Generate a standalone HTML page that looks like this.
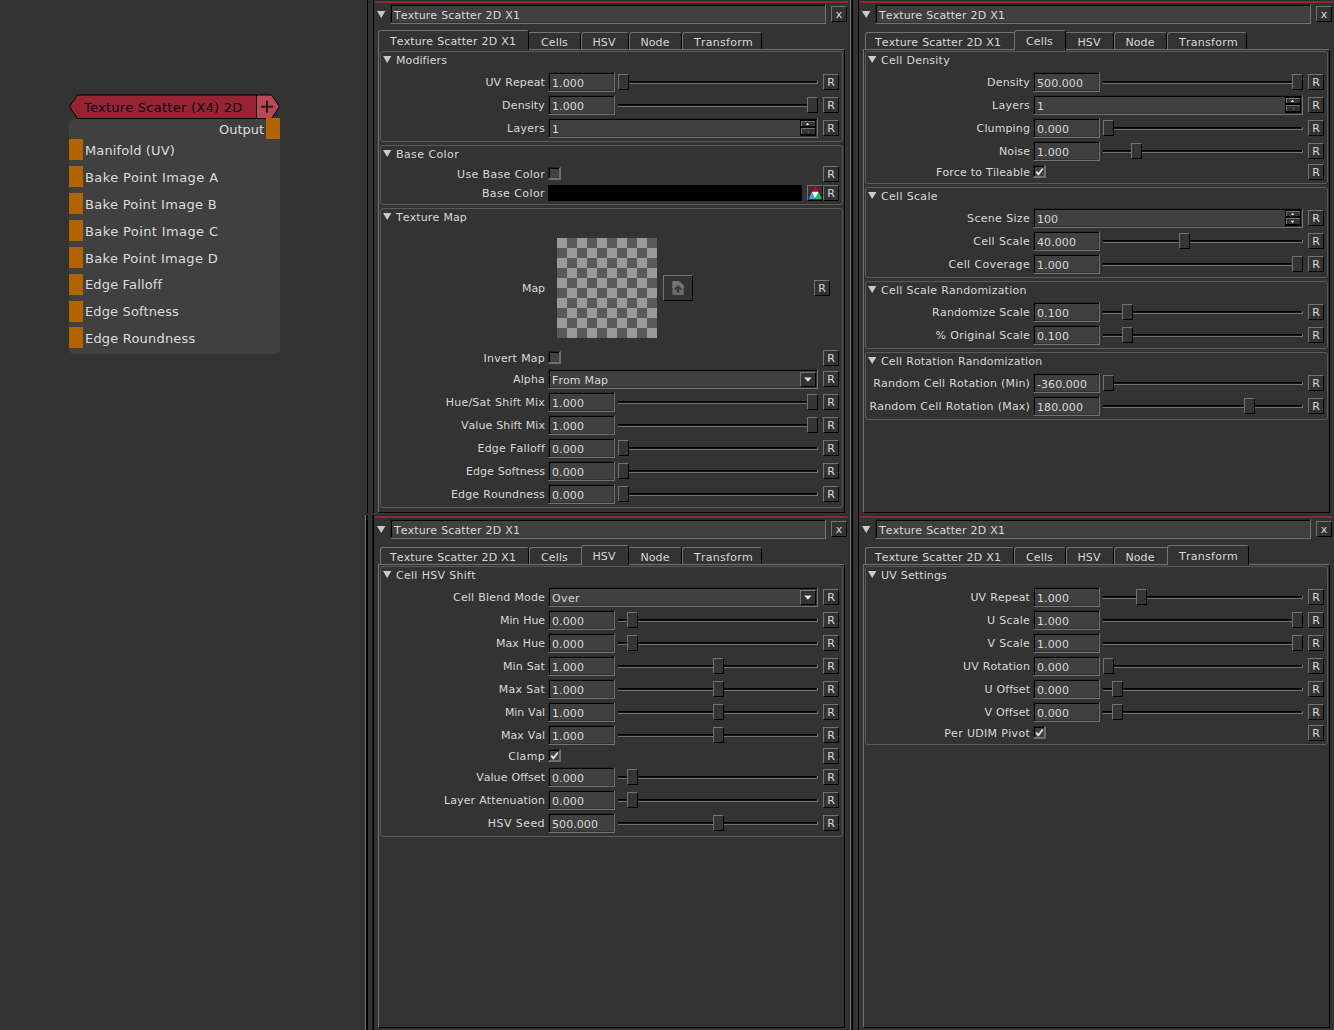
<!DOCTYPE html>
<html><head><meta charset="utf-8"><title>Texture Scatter 2D</title>
<style>
html,body{margin:0;padding:0;background:#333333;}
body{width:1334px;height:1030px;position:relative;overflow:hidden;font-family:"DejaVu Sans","Liberation Sans",sans-serif;font-size:11px;color:#d8d8d8;}
div{position:absolute;}
.t{white-space:nowrap;font-kerning:none;}
.fld{background:#404040;border-top:1px solid #2a2a2a;border-left:1px solid #2a2a2a;border-right:1px solid #727272;border-bottom:1px solid #727272;box-shadow:inset 1px 1px 0 0 #000,inset -1px -1px 0 0 #333;}
.rb{width:14px;height:14px;background:#333333;border-top:1px solid #727272;border-left:1px solid #727272;border-right:1px solid #000;border-bottom:1px solid #000;}
.rb span{position:absolute;left:0;top:1px;width:14px;line-height:14px;text-align:center;font-size:11px;}
svg{display:block;}
.grv{width:199px;height:2px;background:linear-gradient(#000 50%,#141414 50%);border-bottom:1px solid #727272;border-right:1px solid #727272;}
.hnd{width:9px;height:14px;background:#353535;border-top:1px solid #727272;border-left:1px solid #727272;border-right:1px solid #000;border-bottom:1px solid #000;}
.cb{width:10px;height:10px;background:#414141;border-top:1px solid #232323;border-left:1px solid #232323;border-right:2px solid #6f6f6f;border-bottom:2px solid #6f6f6f;box-shadow:inset 1px 1px 0 0 #000;}
.cb svg{position:absolute;left:1px;top:1px;}
.sb{width:13px;background:#333333;border-top:1px solid #727272;border-left:1px solid #727272;}
.sb svg{position:absolute;left:0;top:0;}
.cbtn{width:14px;height:13px;background:#333333;border-top:1px solid #727272;border-left:1px solid #727272;border-right:1px solid #000;border-bottom:1px solid #000;}
.cbtn svg{position:absolute;left:0;top:0;}
.chk{width:100px;height:100px;background-color:#595959;background-image:conic-gradient(#595959 25%,#9a9a9a 0 50%,#595959 0 75%,#9a9a9a 0);background-size:20px 20px;}
.lb{width:28px;height:24px;background:#333333;border-top:1px solid #727272;border-left:1px solid #727272;border-right:1px solid #000;border-bottom:1px solid #000;}
.lb svg{position:absolute;left:0;top:0;}
</style></head>
<body>
<div style="left:367px;top:0px;width:1px;height:513px;background:#000"></div>
<div style="left:373px;top:0px;width:1px;height:513px;background:#000"></div>
<div style="left:365px;top:515px;width:1px;height:515px;background:#727272"></div>
<div style="left:366px;top:515px;width:2px;height:515px;background:#000"></div>
<div style="left:372px;top:515px;width:1px;height:515px;background:#161616"></div>
<div style="left:373px;top:515px;width:1px;height:515px;background:#000"></div>
<div style="left:850px;top:0px;width:1px;height:1030px;background:#727272"></div>
<div style="left:851px;top:0px;width:1px;height:1030px;background:#181818"></div>
<div style="left:852px;top:0px;width:1px;height:1030px;background:#000"></div>
<div style="left:858px;top:0px;width:1px;height:1030px;background:#000"></div>
<div style="left:375px;top:1px;width:473px;height:2px;background:#982433"></div>
<div style="left:375px;top:0px;width:474px;height:1px;background:#262b2b"></div>
<div style="left:375px;top:3px;width:474px;height:1px;background:#2b3030"></div>
<div style="left:377px;top:11px;width:9px;height:7px"><svg width="9" height="7" viewBox="0 0 9 7"><path d="M0 0H8.4L4.2 7Z" fill="#c9c9c9"/></svg></div>
<div style="left:390px;top:4px;width:436px;height:20px;border-top:1px solid #242424;border-left:1px solid #242424;border-right:1px solid #727272;border-bottom:1px solid #727272;box-sizing:border-box"></div>
<div style="left:391px;top:5px;width:434px;height:17px;background:#404040;border-left:1px solid #000;border-top:1px solid #000;box-sizing:border-box"></div>
<div class="t" style="top:9px;line-height:13px;font-size:11px;letter-spacing:0.095px;word-spacing:0.409px;left:394px;">Texture Scatter 2D X1</div>
<div class="rb" style="left:831px;top:6px"><span>x</span></div>
<div style="left:378px;top:49px;width:467px;height:464px;border-left:1px solid #727272;border-top:1px solid #727272;border-right:1px solid #000;border-bottom:1px solid #000;box-sizing:border-box"></div>
<div style="left:529px;top:32px;width:52px;height:17px;border-top:1px solid #727272;border-right:1px solid #000;border-radius:0 3px 0 0;box-sizing:border-box;background:#333333"></div>
<div class="t" style="top:36px;line-height:13px;font-size:11px;letter-spacing:0.141px;left:541px;">Cells</div>
<div style="left:581px;top:32px;width:48px;height:17px;border-left:1px solid #727272;border-top:1px solid #727272;border-right:1px solid #000;border-radius:3px 3px 0 0;box-sizing:border-box;background:#333333"></div>
<div class="t" style="top:36px;line-height:13px;font-size:11px;letter-spacing:0.073px;left:592.5px;">HSV</div>
<div style="left:629px;top:32px;width:53px;height:17px;border-left:1px solid #727272;border-top:1px solid #727272;border-right:1px solid #000;border-radius:3px 3px 0 0;box-sizing:border-box;background:#333333"></div>
<div class="t" style="top:36px;line-height:13px;font-size:11px;letter-spacing:0.070px;left:640.5px;">Node</div>
<div style="left:682px;top:32px;width:80px;height:17px;border-left:1px solid #727272;border-top:1px solid #727272;border-right:1px solid #000;border-radius:3px 3px 0 0;box-sizing:border-box;background:#333333"></div>
<div class="t" style="top:36px;line-height:13px;font-size:11px;letter-spacing:0.273px;left:694px;">Transform</div>
<div style="left:378px;top:30px;width:151px;height:20px;border-left:1px solid #727272;border-top:1px solid #727272;border-right:1px solid #000;border-radius:3px 3px 0 0;box-sizing:border-box;background:#333333"></div>
<div class="t" style="top:35px;line-height:13px;font-size:11px;letter-spacing:0.095px;word-spacing:0.409px;left:390px;">Texture Scatter 2D X1</div>
<div style="left:380px;top:51px;width:463px;height:91px;border:1px solid #5a5a5a;border-radius:3px;box-sizing:border-box"></div>
<div style="left:383px;top:56px;width:9px;height:7px"><svg width="9" height="7" viewBox="0 0 9 7"><path d="M0 0H8.4L4.2 7Z" fill="#c9c9c9"/></svg></div>
<div class="t" style="top:54px;line-height:13px;font-size:11px;letter-spacing:0.087px;left:396px;">Modifiers</div>
<div class="t" style="top:76px;line-height:13px;font-size:11px;letter-spacing:0.100px;word-spacing:0.403px;right:789px;">UV Repeat</div>
<div class="fld" style="left:548px;top:72px;width:65px;height:18px"></div>
<div class="t" style="top:77px;line-height:13px;font-size:11px;letter-spacing:0.100px;left:552px;">1.000</div>
<div class="grv" style="left:618px;top:81px"></div>
<div class="hnd" style="left:618px;top:74px"></div>
<div class="rb" style="left:823px;top:74px"><span>R</span></div>
<div class="t" style="top:99px;line-height:13px;font-size:11px;letter-spacing:0.153px;right:789px;">Density</div>
<div class="fld" style="left:548px;top:95px;width:65px;height:18px"></div>
<div class="t" style="top:100px;line-height:13px;font-size:11px;letter-spacing:0.100px;left:552px;">1.000</div>
<div class="grv" style="left:618px;top:104px"></div>
<div class="hnd" style="left:807px;top:97px"></div>
<div class="rb" style="left:823px;top:97px"><span>R</span></div>
<div class="t" style="top:122px;line-height:13px;font-size:11px;letter-spacing:0.266px;right:789px;">Layers</div>
<div class="fld" style="left:548px;top:118px;width:268px;height:18px"></div>
<div class="t" style="top:123px;line-height:13px;font-size:11px;left:552px;">1</div>
<div style="left:800px;top:120px;width:16px;height:16px;background:#000"></div>
<div class="sb" style="left:801px;top:121px;height:4px"><svg width="13" height="4" viewBox="0 0 13 4"><path d="M3.7 3L5.5 0.8L7.3 3Z" fill="#e8e8e8"/></svg></div>
<div class="sb" style="left:801px;top:128px;height:5px"><svg width="13" height="5" viewBox="0 0 13 5"><path d="M5.6 2.2H7.2L6.6 3.8Z" fill="#8a8a8a"/></svg></div>
<div class="rb" style="left:823px;top:120px"><span>R</span></div>
<div style="left:380px;top:145px;width:463px;height:60px;border:1px solid #5a5a5a;border-radius:3px;box-sizing:border-box"></div>
<div style="left:383px;top:150px;width:9px;height:7px"><svg width="9" height="7" viewBox="0 0 9 7"><path d="M0 0H8.4L4.2 7Z" fill="#c9c9c9"/></svg></div>
<div class="t" style="top:148px;line-height:13px;font-size:11px;letter-spacing:0.398px;word-spacing:0.106px;left:396px;">Base Color</div>
<div class="t" style="top:168px;line-height:13px;font-size:11px;letter-spacing:0.319px;word-spacing:0.184px;right:789px;">Use Base Color</div>
<div class="cb" style="left:548px;top:167px"></div>
<div class="rb" style="left:823px;top:166px"><span>R</span></div>
<div class="t" style="top:187px;line-height:13px;font-size:11px;letter-spacing:0.398px;word-spacing:0.106px;right:789px;">Base Color</div>
<div style="left:548px;top:185px;width:254px;height:16px;background:#000"></div>
<div class="rb" style="left:807px;top:185px"><svg width="14" height="14" viewBox="0 0 14 14" style="position:absolute;left:0;top:0"><path d="M7.3 1.6L10 6.4H4.5Z" fill="#e2001e" stroke="#e2001e" stroke-width="1.4" stroke-linejoin="round"/><path d="M4.2 7L7 11.8L6.6 12.3H1.9Z" fill="#4a9ef2" stroke="#4a9ef2" stroke-width="1.4" stroke-linejoin="round"/><path d="M10.3 7L12.6 12.3H8L7.4 11.6Z" fill="#08c85e" stroke="#08c85e" stroke-width="1.4" stroke-linejoin="round"/><path d="M4.6 6.3H9.9L7.2 11.3Z" fill="#fff" stroke="#fff" stroke-width="0.8" stroke-linejoin="round"/></svg></div>
<div class="rb" style="left:823px;top:185px"><span>R</span></div>
<div style="left:380px;top:208px;width:463px;height:300px;border:1px solid #5a5a5a;border-radius:3px;box-sizing:border-box"></div>
<div style="left:383px;top:213px;width:9px;height:7px"><svg width="9" height="7" viewBox="0 0 9 7"><path d="M0 0H8.4L4.2 7Z" fill="#c9c9c9"/></svg></div>
<div class="t" style="top:211px;line-height:13px;font-size:11px;letter-spacing:0.118px;word-spacing:0.385px;left:396px;">Texture Map</div>
<div class="t" style="top:282px;line-height:13px;font-size:11px;letter-spacing:-0.073px;right:789px;">Map</div>
<div class="chk" style="left:557px;top:238px"></div>
<div class="lb" style="left:663px;top:275px"><svg width="28" height="24" viewBox="0 0 28 24"><path d="M9.3 5H14.8L19.7 9.6V18.2Q19.7 19 18.9 19H9.3Q8.5 19 8.5 18.2V5.8Q8.5 5 9.3 5Z" fill="#6c6c6c"/><path d="M9.3 5H14.8L19.7 9.6V12H8.5V5.8Q8.5 5 9.3 5Z" fill="#757575"/><path d="M14 17V12.4M10.9 13.6L14 10.6L17.1 13.6" fill="none" stroke="#363636" stroke-width="2.1"/></svg></div>
<div class="rb" style="left:814px;top:280px"><span>R</span></div>
<div class="t" style="top:352px;line-height:13px;font-size:11px;letter-spacing:0.217px;word-spacing:0.287px;right:789px;">Invert Map</div>
<div class="cb" style="left:548px;top:351px"></div>
<div class="rb" style="left:823px;top:350px"><span>R</span></div>
<div class="t" style="top:373px;line-height:13px;font-size:11px;letter-spacing:0.144px;right:789px;">Alpha</div>
<div class="fld" style="left:548px;top:369px;width:268px;height:18px"></div>
<div class="t" style="top:374px;line-height:13px;font-size:11px;letter-spacing:0.069px;word-spacing:0.435px;left:552px;">From Map</div>
<div class="cbtn" style="left:800px;top:372px"><svg width="14" height="13" viewBox="0 0 14 13"><path d="M3.2 4.6H10.6L6.9 8.8Z" fill="#e4e4e4"/></svg></div>
<div class="rb" style="left:823px;top:371px"><span>R</span></div>
<div class="t" style="top:396px;line-height:13px;font-size:11px;letter-spacing:0.213px;word-spacing:0.291px;right:789px;">Hue/Sat Shift Mix</div>
<div class="fld" style="left:548px;top:392px;width:65px;height:18px"></div>
<div class="t" style="top:397px;line-height:13px;font-size:11px;letter-spacing:0.100px;left:552px;">1.000</div>
<div class="grv" style="left:618px;top:401px"></div>
<div class="hnd" style="left:807px;top:394px"></div>
<div class="rb" style="left:823px;top:394px"><span>R</span></div>
<div class="t" style="top:419px;line-height:13px;font-size:11px;letter-spacing:0.052px;word-spacing:0.451px;right:789px;">Value Shift Mix</div>
<div class="fld" style="left:548px;top:415px;width:65px;height:18px"></div>
<div class="t" style="top:420px;line-height:13px;font-size:11px;letter-spacing:0.100px;left:552px;">1.000</div>
<div class="grv" style="left:618px;top:424px"></div>
<div class="hnd" style="left:807px;top:417px"></div>
<div class="rb" style="left:823px;top:417px"><span>R</span></div>
<div class="t" style="top:442px;line-height:13px;font-size:11px;letter-spacing:0.193px;word-spacing:0.310px;right:789px;">Edge Falloff</div>
<div class="fld" style="left:548px;top:438px;width:65px;height:18px"></div>
<div class="t" style="top:443px;line-height:13px;font-size:11px;letter-spacing:0.100px;left:552px;">0.000</div>
<div class="grv" style="left:618px;top:447px"></div>
<div class="hnd" style="left:618px;top:440px"></div>
<div class="rb" style="left:823px;top:440px"><span>R</span></div>
<div class="t" style="top:465px;line-height:13px;font-size:11px;letter-spacing:0.018px;word-spacing:0.485px;right:789px;">Edge Softness</div>
<div class="fld" style="left:548px;top:461px;width:65px;height:18px"></div>
<div class="t" style="top:466px;line-height:13px;font-size:11px;letter-spacing:0.100px;left:552px;">0.000</div>
<div class="grv" style="left:618px;top:470px"></div>
<div class="hnd" style="left:618px;top:463px"></div>
<div class="rb" style="left:823px;top:463px"><span>R</span></div>
<div class="t" style="top:488px;line-height:13px;font-size:11px;letter-spacing:0.139px;word-spacing:0.364px;right:789px;">Edge Roundness</div>
<div class="fld" style="left:548px;top:484px;width:65px;height:18px"></div>
<div class="t" style="top:489px;line-height:13px;font-size:11px;letter-spacing:0.100px;left:552px;">0.000</div>
<div class="grv" style="left:618px;top:493px"></div>
<div class="hnd" style="left:618px;top:486px"></div>
<div class="rb" style="left:823px;top:486px"><span>R</span></div>
<div style="left:860px;top:1px;width:473px;height:2px;background:#982433"></div>
<div style="left:860px;top:0px;width:474px;height:1px;background:#262b2b"></div>
<div style="left:860px;top:3px;width:474px;height:1px;background:#2b3030"></div>
<div style="left:862px;top:11px;width:9px;height:7px"><svg width="9" height="7" viewBox="0 0 9 7"><path d="M0 0H8.4L4.2 7Z" fill="#c9c9c9"/></svg></div>
<div style="left:875px;top:4px;width:436px;height:20px;border-top:1px solid #242424;border-left:1px solid #242424;border-right:1px solid #727272;border-bottom:1px solid #727272;box-sizing:border-box"></div>
<div style="left:876px;top:5px;width:434px;height:17px;background:#404040;border-left:1px solid #000;border-top:1px solid #000;box-sizing:border-box"></div>
<div class="t" style="top:9px;line-height:13px;font-size:11px;letter-spacing:0.095px;word-spacing:0.409px;left:879px;">Texture Scatter 2D X1</div>
<div class="rb" style="left:1316px;top:6px"><span>x</span></div>
<div style="left:863px;top:49px;width:467px;height:464px;border-left:1px solid #727272;border-top:1px solid #727272;border-right:1px solid #000;border-bottom:1px solid #000;box-sizing:border-box"></div>
<div style="left:865px;top:32px;width:149px;height:17px;border-left:1px solid #727272;border-top:1px solid #727272;border-radius:3px 0 0 0;box-sizing:border-box;background:#333333"></div>
<div class="t" style="top:36px;line-height:13px;font-size:11px;letter-spacing:0.095px;word-spacing:0.409px;left:875px;">Texture Scatter 2D X1</div>
<div style="left:1066px;top:32px;width:48px;height:17px;border-top:1px solid #727272;border-right:1px solid #000;border-radius:0 3px 0 0;box-sizing:border-box;background:#333333"></div>
<div class="t" style="top:36px;line-height:13px;font-size:11px;letter-spacing:0.073px;left:1077.5px;">HSV</div>
<div style="left:1114px;top:32px;width:53px;height:17px;border-left:1px solid #727272;border-top:1px solid #727272;border-right:1px solid #000;border-radius:3px 3px 0 0;box-sizing:border-box;background:#333333"></div>
<div class="t" style="top:36px;line-height:13px;font-size:11px;letter-spacing:0.070px;left:1125.5px;">Node</div>
<div style="left:1167px;top:32px;width:80px;height:17px;border-left:1px solid #727272;border-top:1px solid #727272;border-right:1px solid #000;border-radius:3px 3px 0 0;box-sizing:border-box;background:#333333"></div>
<div class="t" style="top:36px;line-height:13px;font-size:11px;letter-spacing:0.273px;left:1179px;">Transform</div>
<div style="left:1014px;top:30px;width:52px;height:20px;border-left:1px solid #727272;border-top:1px solid #727272;border-right:1px solid #000;border-radius:3px 3px 0 0;box-sizing:border-box;background:#333333"></div>
<div class="t" style="top:35px;line-height:13px;font-size:11px;letter-spacing:0.141px;left:1026px;">Cells</div>
<div style="left:865px;top:51px;width:463px;height:133px;border:1px solid #5a5a5a;border-radius:3px;box-sizing:border-box"></div>
<div style="left:868px;top:56px;width:9px;height:7px"><svg width="9" height="7" viewBox="0 0 9 7"><path d="M0 0H8.4L4.2 7Z" fill="#c9c9c9"/></svg></div>
<div class="t" style="top:54px;line-height:13px;font-size:11px;letter-spacing:0.228px;word-spacing:0.276px;left:881px;">Cell Density</div>
<div class="t" style="top:76px;line-height:13px;font-size:11px;letter-spacing:0.153px;right:304px;">Density</div>
<div class="fld" style="left:1033px;top:72px;width:65px;height:18px"></div>
<div class="t" style="top:77px;line-height:13px;font-size:11px;letter-spacing:0.071px;left:1037px;">500.000</div>
<div class="grv" style="left:1103px;top:81px"></div>
<div class="hnd" style="left:1292px;top:74px"></div>
<div class="rb" style="left:1308px;top:74px"><span>R</span></div>
<div class="t" style="top:99px;line-height:13px;font-size:11px;letter-spacing:0.266px;right:304px;">Layers</div>
<div class="fld" style="left:1033px;top:95px;width:268px;height:18px"></div>
<div class="t" style="top:100px;line-height:13px;font-size:11px;left:1037px;">1</div>
<div style="left:1285px;top:97px;width:16px;height:16px;background:#000"></div>
<div class="sb" style="left:1286px;top:98px;height:4px"><svg width="13" height="4" viewBox="0 0 13 4"><path d="M3.7 3L5.5 0.8L7.3 3Z" fill="#e8e8e8"/></svg></div>
<div class="sb" style="left:1286px;top:105px;height:5px"><svg width="13" height="5" viewBox="0 0 13 5"><path d="M5.6 2.2H7.2L6.6 3.8Z" fill="#8a8a8a"/></svg></div>
<div class="rb" style="left:1308px;top:97px"><span>R</span></div>
<div class="t" style="top:122px;line-height:13px;font-size:11px;letter-spacing:0.122px;right:304px;">Clumping</div>
<div class="fld" style="left:1033px;top:118px;width:65px;height:18px"></div>
<div class="t" style="top:123px;line-height:13px;font-size:11px;letter-spacing:0.100px;left:1037px;">0.000</div>
<div class="grv" style="left:1103px;top:127px"></div>
<div class="hnd" style="left:1103px;top:120px"></div>
<div class="rb" style="left:1308px;top:120px"><span>R</span></div>
<div class="t" style="top:145px;line-height:13px;font-size:11px;letter-spacing:0.097px;right:304px;">Noise</div>
<div class="fld" style="left:1033px;top:141px;width:65px;height:18px"></div>
<div class="t" style="top:146px;line-height:13px;font-size:11px;letter-spacing:0.100px;left:1037px;">1.000</div>
<div class="grv" style="left:1103px;top:150px"></div>
<div class="hnd" style="left:1131px;top:143px"></div>
<div class="rb" style="left:1308px;top:143px"><span>R</span></div>
<div class="t" style="top:166px;line-height:13px;font-size:11px;letter-spacing:0.094px;word-spacing:0.409px;right:304px;">Force to Tileable</div>
<div class="cb" style="left:1033px;top:165px"><svg width="9" height="9" viewBox="0 0 9 9"><path d="M1.2 4.6L3.4 7.3L7.8 1.5" fill="none" stroke="#e8e8e8" stroke-width="1.7"/></svg></div>
<div class="rb" style="left:1308px;top:164px"><span>R</span></div>
<div style="left:865px;top:187px;width:463px;height:91px;border:1px solid #5a5a5a;border-radius:3px;box-sizing:border-box"></div>
<div style="left:868px;top:192px;width:9px;height:7px"><svg width="9" height="7" viewBox="0 0 9 7"><path d="M0 0H8.4L4.2 7Z" fill="#c9c9c9"/></svg></div>
<div class="t" style="top:190px;line-height:13px;font-size:11px;letter-spacing:0.293px;word-spacing:0.210px;left:881px;">Cell Scale</div>
<div class="t" style="top:212px;line-height:13px;font-size:11px;letter-spacing:0.308px;word-spacing:0.195px;right:304px;">Scene Size</div>
<div class="fld" style="left:1033px;top:208px;width:268px;height:18px"></div>
<div class="t" style="top:213px;line-height:13px;font-size:11px;left:1037px;">100</div>
<div style="left:1285px;top:210px;width:16px;height:16px;background:#000"></div>
<div class="sb" style="left:1286px;top:211px;height:4px"><svg width="13" height="4" viewBox="0 0 13 4"><path d="M3.7 3L5.5 0.8L7.3 3Z" fill="#e8e8e8"/></svg></div>
<div class="sb" style="left:1286px;top:218px;height:5px"><svg width="13" height="5" viewBox="0 0 13 5"><path d="M3.7 1.8H7.3L5.5 4.2Z" fill="#e8e8e8"/></svg></div>
<div class="rb" style="left:1308px;top:210px"><span>R</span></div>
<div class="t" style="top:235px;line-height:13px;font-size:11px;letter-spacing:0.293px;word-spacing:0.210px;right:304px;">Cell Scale</div>
<div class="fld" style="left:1033px;top:231px;width:65px;height:18px"></div>
<div class="t" style="top:236px;line-height:13px;font-size:11px;letter-spacing:0.083px;left:1037px;">40.000</div>
<div class="grv" style="left:1103px;top:240px"></div>
<div class="hnd" style="left:1179px;top:233px"></div>
<div class="rb" style="left:1308px;top:233px"><span>R</span></div>
<div class="t" style="top:258px;line-height:13px;font-size:11px;letter-spacing:0.353px;word-spacing:0.151px;right:304px;">Cell Coverage</div>
<div class="fld" style="left:1033px;top:254px;width:65px;height:18px"></div>
<div class="t" style="top:259px;line-height:13px;font-size:11px;letter-spacing:0.100px;left:1037px;">1.000</div>
<div class="grv" style="left:1103px;top:263px"></div>
<div class="hnd" style="left:1292px;top:256px"></div>
<div class="rb" style="left:1308px;top:256px"><span>R</span></div>
<div style="left:865px;top:281px;width:463px;height:68px;border:1px solid #5a5a5a;border-radius:3px;box-sizing:border-box"></div>
<div style="left:868px;top:286px;width:9px;height:7px"><svg width="9" height="7" viewBox="0 0 9 7"><path d="M0 0H8.4L4.2 7Z" fill="#c9c9c9"/></svg></div>
<div class="t" style="top:284px;line-height:13px;font-size:11px;letter-spacing:0.228px;word-spacing:0.275px;left:881px;">Cell Scale Randomization</div>
<div class="t" style="top:306px;line-height:13px;font-size:11px;letter-spacing:0.208px;word-spacing:0.295px;right:304px;">Randomize Scale</div>
<div class="fld" style="left:1033px;top:302px;width:65px;height:18px"></div>
<div class="t" style="top:307px;line-height:13px;font-size:11px;letter-spacing:0.100px;left:1037px;">0.100</div>
<div class="grv" style="left:1103px;top:311px"></div>
<div class="hnd" style="left:1122px;top:304px"></div>
<div class="rb" style="left:1308px;top:304px"><span>R</span></div>
<div class="t" style="top:329px;line-height:13px;font-size:11px;letter-spacing:0.236px;word-spacing:0.268px;right:304px;">% Original Scale</div>
<div class="fld" style="left:1033px;top:325px;width:65px;height:18px"></div>
<div class="t" style="top:330px;line-height:13px;font-size:11px;letter-spacing:0.100px;left:1037px;">0.100</div>
<div class="grv" style="left:1103px;top:334px"></div>
<div class="hnd" style="left:1122px;top:327px"></div>
<div class="rb" style="left:1308px;top:327px"><span>R</span></div>
<div style="left:865px;top:352px;width:463px;height:68px;border:1px solid #5a5a5a;border-radius:3px;box-sizing:border-box"></div>
<div style="left:868px;top:357px;width:9px;height:7px"><svg width="9" height="7" viewBox="0 0 9 7"><path d="M0 0H8.4L4.2 7Z" fill="#c9c9c9"/></svg></div>
<div class="t" style="top:355px;line-height:13px;font-size:11px;letter-spacing:0.154px;word-spacing:0.349px;left:881px;">Cell Rotation Randomization</div>
<div class="t" style="top:377px;line-height:13px;font-size:11px;letter-spacing:0.163px;word-spacing:0.340px;right:304px;">Random Cell Rotation (Min)</div>
<div class="fld" style="left:1033px;top:373px;width:65px;height:18px"></div>
<div class="t" style="top:378px;line-height:13px;font-size:11px;letter-spacing:0.066px;left:1037px;">-360.000</div>
<div class="grv" style="left:1103px;top:382px"></div>
<div class="hnd" style="left:1103px;top:375px"></div>
<div class="rb" style="left:1308px;top:375px"><span>R</span></div>
<div class="t" style="top:400px;line-height:13px;font-size:11px;letter-spacing:0.191px;word-spacing:0.313px;right:304px;">Random Cell Rotation (Max)</div>
<div class="fld" style="left:1033px;top:396px;width:65px;height:18px"></div>
<div class="t" style="top:401px;line-height:13px;font-size:11px;letter-spacing:0.071px;left:1037px;">180.000</div>
<div class="grv" style="left:1103px;top:405px"></div>
<div class="hnd" style="left:1244px;top:398px"></div>
<div class="rb" style="left:1308px;top:398px"><span>R</span></div>
<div style="left:375px;top:516px;width:473px;height:2px;background:#982433"></div>
<div style="left:375px;top:515px;width:474px;height:1px;background:#262b2b"></div>
<div style="left:375px;top:518px;width:474px;height:1px;background:#2b3030"></div>
<div style="left:377px;top:526px;width:9px;height:7px"><svg width="9" height="7" viewBox="0 0 9 7"><path d="M0 0H8.4L4.2 7Z" fill="#c9c9c9"/></svg></div>
<div style="left:390px;top:519px;width:436px;height:20px;border-top:1px solid #242424;border-left:1px solid #242424;border-right:1px solid #727272;border-bottom:1px solid #727272;box-sizing:border-box"></div>
<div style="left:391px;top:520px;width:434px;height:17px;background:#404040;border-left:1px solid #000;border-top:1px solid #000;box-sizing:border-box"></div>
<div class="t" style="top:524px;line-height:13px;font-size:11px;letter-spacing:0.095px;word-spacing:0.409px;left:394px;">Texture Scatter 2D X1</div>
<div class="rb" style="left:831px;top:521px"><span>x</span></div>
<div style="left:378px;top:564px;width:467px;height:464px;border-left:1px solid #727272;border-top:1px solid #727272;border-right:1px solid #000;border-bottom:1px solid #000;box-sizing:border-box"></div>
<div style="left:380px;top:547px;width:149px;height:17px;border-left:1px solid #727272;border-top:1px solid #727272;border-right:1px solid #000;border-radius:3px 3px 0 0;box-sizing:border-box;background:#333333"></div>
<div class="t" style="top:551px;line-height:13px;font-size:11px;letter-spacing:0.095px;word-spacing:0.409px;left:390px;">Texture Scatter 2D X1</div>
<div style="left:529px;top:547px;width:52px;height:17px;border-left:1px solid #727272;border-top:1px solid #727272;border-radius:3px 0 0 0;box-sizing:border-box;background:#333333"></div>
<div class="t" style="top:551px;line-height:13px;font-size:11px;letter-spacing:0.141px;left:541px;">Cells</div>
<div style="left:629px;top:547px;width:53px;height:17px;border-top:1px solid #727272;border-right:1px solid #000;border-radius:0 3px 0 0;box-sizing:border-box;background:#333333"></div>
<div class="t" style="top:551px;line-height:13px;font-size:11px;letter-spacing:0.070px;left:640.5px;">Node</div>
<div style="left:682px;top:547px;width:80px;height:17px;border-left:1px solid #727272;border-top:1px solid #727272;border-right:1px solid #000;border-radius:3px 3px 0 0;box-sizing:border-box;background:#333333"></div>
<div class="t" style="top:551px;line-height:13px;font-size:11px;letter-spacing:0.273px;left:694px;">Transform</div>
<div style="left:581px;top:545px;width:48px;height:20px;border-left:1px solid #727272;border-top:1px solid #727272;border-right:1px solid #000;border-radius:3px 3px 0 0;box-sizing:border-box;background:#333333"></div>
<div class="t" style="top:550px;line-height:13px;font-size:11px;letter-spacing:0.073px;left:592.5px;">HSV</div>
<div style="left:380px;top:566px;width:463px;height:271px;border:1px solid #5a5a5a;border-radius:3px;box-sizing:border-box"></div>
<div style="left:383px;top:571px;width:9px;height:7px"><svg width="9" height="7" viewBox="0 0 9 7"><path d="M0 0H8.4L4.2 7Z" fill="#c9c9c9"/></svg></div>
<div class="t" style="top:569px;line-height:13px;font-size:11px;letter-spacing:0.272px;word-spacing:0.232px;left:396px;">Cell HSV Shift</div>
<div class="t" style="top:591px;line-height:13px;font-size:11px;letter-spacing:0.156px;word-spacing:0.347px;right:789px;">Cell Blend Mode</div>
<div class="fld" style="left:548px;top:587px;width:268px;height:18px"></div>
<div class="t" style="top:592px;line-height:13px;font-size:11px;letter-spacing:0.383px;left:552px;">Over</div>
<div class="cbtn" style="left:800px;top:590px"><svg width="14" height="13" viewBox="0 0 14 13"><path d="M3.2 4.6H10.6L6.9 8.8Z" fill="#e4e4e4"/></svg></div>
<div class="rb" style="left:823px;top:589px"><span>R</span></div>
<div class="t" style="top:614px;line-height:13px;font-size:11px;letter-spacing:-0.089px;word-spacing:0.593px;right:789px;">Min Hue</div>
<div class="fld" style="left:548px;top:610px;width:65px;height:18px"></div>
<div class="t" style="top:615px;line-height:13px;font-size:11px;letter-spacing:0.100px;left:552px;">0.000</div>
<div class="grv" style="left:618px;top:619px"></div>
<div class="hnd" style="left:627px;top:612px"></div>
<div class="rb" style="left:823px;top:612px"><span>R</span></div>
<div class="t" style="top:637px;line-height:13px;font-size:11px;letter-spacing:0.041px;word-spacing:0.462px;right:789px;">Max Hue</div>
<div class="fld" style="left:548px;top:633px;width:65px;height:18px"></div>
<div class="t" style="top:638px;line-height:13px;font-size:11px;letter-spacing:0.100px;left:552px;">0.000</div>
<div class="grv" style="left:618px;top:642px"></div>
<div class="hnd" style="left:627px;top:635px"></div>
<div class="rb" style="left:823px;top:635px"><span>R</span></div>
<div class="t" style="top:660px;line-height:13px;font-size:11px;letter-spacing:0.089px;word-spacing:0.414px;right:789px;">Min Sat</div>
<div class="fld" style="left:548px;top:656px;width:65px;height:18px"></div>
<div class="t" style="top:661px;line-height:13px;font-size:11px;letter-spacing:0.100px;left:552px;">1.000</div>
<div class="grv" style="left:618px;top:665px"></div>
<div class="hnd" style="left:713px;top:658px"></div>
<div class="rb" style="left:823px;top:658px"><span>R</span></div>
<div class="t" style="top:683px;line-height:13px;font-size:11px;letter-spacing:0.253px;word-spacing:0.251px;right:789px;">Max Sat</div>
<div class="fld" style="left:548px;top:679px;width:65px;height:18px"></div>
<div class="t" style="top:684px;line-height:13px;font-size:11px;letter-spacing:0.100px;left:552px;">1.000</div>
<div class="grv" style="left:618px;top:688px"></div>
<div class="hnd" style="left:713px;top:681px"></div>
<div class="rb" style="left:823px;top:681px"><span>R</span></div>
<div class="t" style="top:706px;line-height:13px;font-size:11px;letter-spacing:-0.125px;word-spacing:0.628px;right:789px;">Min Val</div>
<div class="fld" style="left:548px;top:702px;width:65px;height:18px"></div>
<div class="t" style="top:707px;line-height:13px;font-size:11px;letter-spacing:0.100px;left:552px;">1.000</div>
<div class="grv" style="left:618px;top:711px"></div>
<div class="hnd" style="left:713px;top:704px"></div>
<div class="rb" style="left:823px;top:704px"><span>R</span></div>
<div class="t" style="top:729px;line-height:13px;font-size:11px;letter-spacing:0.006px;word-spacing:0.498px;right:789px;">Max Val</div>
<div class="fld" style="left:548px;top:725px;width:65px;height:18px"></div>
<div class="t" style="top:730px;line-height:13px;font-size:11px;letter-spacing:0.100px;left:552px;">1.000</div>
<div class="grv" style="left:618px;top:734px"></div>
<div class="hnd" style="left:713px;top:727px"></div>
<div class="rb" style="left:823px;top:727px"><span>R</span></div>
<div class="t" style="top:750px;line-height:13px;font-size:11px;letter-spacing:0.312px;right:789px;">Clamp</div>
<div class="cb" style="left:548px;top:749px"><svg width="9" height="9" viewBox="0 0 9 9"><path d="M1.2 4.6L3.4 7.3L7.8 1.5" fill="none" stroke="#e8e8e8" stroke-width="1.7"/></svg></div>
<div class="rb" style="left:823px;top:748px"><span>R</span></div>
<div class="t" style="top:771px;line-height:13px;font-size:11px;letter-spacing:0.053px;word-spacing:0.450px;right:789px;">Value Offset</div>
<div class="fld" style="left:548px;top:767px;width:65px;height:18px"></div>
<div class="t" style="top:772px;line-height:13px;font-size:11px;letter-spacing:0.100px;left:552px;">0.000</div>
<div class="grv" style="left:618px;top:776px"></div>
<div class="hnd" style="left:627px;top:769px"></div>
<div class="rb" style="left:823px;top:769px"><span>R</span></div>
<div class="t" style="top:794px;line-height:13px;font-size:11px;letter-spacing:0.103px;word-spacing:0.400px;right:789px;">Layer Attenuation</div>
<div class="fld" style="left:548px;top:790px;width:65px;height:18px"></div>
<div class="t" style="top:795px;line-height:13px;font-size:11px;letter-spacing:0.100px;left:552px;">0.000</div>
<div class="grv" style="left:618px;top:799px"></div>
<div class="hnd" style="left:627px;top:792px"></div>
<div class="rb" style="left:823px;top:792px"><span>R</span></div>
<div class="t" style="top:817px;line-height:13px;font-size:11px;letter-spacing:0.416px;word-spacing:0.087px;right:789px;">HSV Seed</div>
<div class="fld" style="left:548px;top:813px;width:65px;height:18px"></div>
<div class="t" style="top:818px;line-height:13px;font-size:11px;letter-spacing:0.071px;left:552px;">500.000</div>
<div class="grv" style="left:618px;top:822px"></div>
<div class="hnd" style="left:713px;top:815px"></div>
<div class="rb" style="left:823px;top:815px"><span>R</span></div>
<div style="left:860px;top:516px;width:473px;height:2px;background:#982433"></div>
<div style="left:860px;top:515px;width:474px;height:1px;background:#262b2b"></div>
<div style="left:860px;top:518px;width:474px;height:1px;background:#2b3030"></div>
<div style="left:862px;top:526px;width:9px;height:7px"><svg width="9" height="7" viewBox="0 0 9 7"><path d="M0 0H8.4L4.2 7Z" fill="#c9c9c9"/></svg></div>
<div style="left:875px;top:519px;width:436px;height:20px;border-top:1px solid #242424;border-left:1px solid #242424;border-right:1px solid #727272;border-bottom:1px solid #727272;box-sizing:border-box"></div>
<div style="left:876px;top:520px;width:434px;height:17px;background:#404040;border-left:1px solid #000;border-top:1px solid #000;box-sizing:border-box"></div>
<div class="t" style="top:524px;line-height:13px;font-size:11px;letter-spacing:0.095px;word-spacing:0.409px;left:879px;">Texture Scatter 2D X1</div>
<div class="rb" style="left:1316px;top:521px"><span>x</span></div>
<div style="left:863px;top:564px;width:467px;height:464px;border-left:1px solid #727272;border-top:1px solid #727272;border-right:1px solid #000;border-bottom:1px solid #000;box-sizing:border-box"></div>
<div style="left:865px;top:547px;width:149px;height:17px;border-left:1px solid #727272;border-top:1px solid #727272;border-right:1px solid #000;border-radius:3px 3px 0 0;box-sizing:border-box;background:#333333"></div>
<div class="t" style="top:551px;line-height:13px;font-size:11px;letter-spacing:0.095px;word-spacing:0.409px;left:875px;">Texture Scatter 2D X1</div>
<div style="left:1014px;top:547px;width:52px;height:17px;border-left:1px solid #727272;border-top:1px solid #727272;border-right:1px solid #000;border-radius:3px 3px 0 0;box-sizing:border-box;background:#333333"></div>
<div class="t" style="top:551px;line-height:13px;font-size:11px;letter-spacing:0.141px;left:1026px;">Cells</div>
<div style="left:1066px;top:547px;width:48px;height:17px;border-left:1px solid #727272;border-top:1px solid #727272;border-right:1px solid #000;border-radius:3px 3px 0 0;box-sizing:border-box;background:#333333"></div>
<div class="t" style="top:551px;line-height:13px;font-size:11px;letter-spacing:0.073px;left:1077.5px;">HSV</div>
<div style="left:1114px;top:547px;width:53px;height:17px;border-left:1px solid #727272;border-top:1px solid #727272;border-radius:3px 0 0 0;box-sizing:border-box;background:#333333"></div>
<div class="t" style="top:551px;line-height:13px;font-size:11px;letter-spacing:0.070px;left:1125.5px;">Node</div>
<div style="left:1167px;top:545px;width:82px;height:20px;border-left:1px solid #727272;border-top:1px solid #727272;border-right:1px solid #000;border-radius:3px 3px 0 0;box-sizing:border-box;background:#333333"></div>
<div class="t" style="top:550px;line-height:13px;font-size:11px;letter-spacing:0.273px;left:1179px;">Transform</div>
<div style="left:865px;top:566px;width:463px;height:179px;border:1px solid #5a5a5a;border-radius:3px;box-sizing:border-box"></div>
<div style="left:868px;top:571px;width:9px;height:7px"><svg width="9" height="7" viewBox="0 0 9 7"><path d="M0 0H8.4L4.2 7Z" fill="#c9c9c9"/></svg></div>
<div class="t" style="top:569px;line-height:13px;font-size:11px;letter-spacing:0.119px;word-spacing:0.384px;left:881px;">UV Settings</div>
<div class="t" style="top:591px;line-height:13px;font-size:11px;letter-spacing:0.100px;word-spacing:0.403px;right:304px;">UV Repeat</div>
<div class="fld" style="left:1033px;top:587px;width:65px;height:18px"></div>
<div class="t" style="top:592px;line-height:13px;font-size:11px;letter-spacing:0.100px;left:1037px;">1.000</div>
<div class="grv" style="left:1103px;top:596px"></div>
<div class="hnd" style="left:1136px;top:589px"></div>
<div class="rb" style="left:1308px;top:589px"><span>R</span></div>
<div class="t" style="top:614px;line-height:13px;font-size:11px;letter-spacing:0.207px;word-spacing:0.297px;right:304px;">U Scale</div>
<div class="fld" style="left:1033px;top:610px;width:65px;height:18px"></div>
<div class="t" style="top:615px;line-height:13px;font-size:11px;letter-spacing:0.100px;left:1037px;">1.000</div>
<div class="grv" style="left:1103px;top:619px"></div>
<div class="hnd" style="left:1292px;top:612px"></div>
<div class="rb" style="left:1308px;top:612px"><span>R</span></div>
<div class="t" style="top:637px;line-height:13px;font-size:11px;letter-spacing:0.245px;word-spacing:0.258px;right:304px;">V Scale</div>
<div class="fld" style="left:1033px;top:633px;width:65px;height:18px"></div>
<div class="t" style="top:638px;line-height:13px;font-size:11px;letter-spacing:0.100px;left:1037px;">1.000</div>
<div class="grv" style="left:1103px;top:642px"></div>
<div class="hnd" style="left:1292px;top:635px"></div>
<div class="rb" style="left:1308px;top:635px"><span>R</span></div>
<div class="t" style="top:660px;line-height:13px;font-size:11px;letter-spacing:0.092px;word-spacing:0.412px;right:304px;">UV Rotation</div>
<div class="fld" style="left:1033px;top:656px;width:65px;height:18px"></div>
<div class="t" style="top:661px;line-height:13px;font-size:11px;letter-spacing:0.100px;left:1037px;">0.000</div>
<div class="grv" style="left:1103px;top:665px"></div>
<div class="hnd" style="left:1103px;top:658px"></div>
<div class="rb" style="left:1308px;top:658px"><span>R</span></div>
<div class="t" style="top:683px;line-height:13px;font-size:11px;letter-spacing:0.041px;word-spacing:0.462px;right:304px;">U Offset</div>
<div class="fld" style="left:1033px;top:679px;width:65px;height:18px"></div>
<div class="t" style="top:684px;line-height:13px;font-size:11px;letter-spacing:0.100px;left:1037px;">0.000</div>
<div class="grv" style="left:1103px;top:688px"></div>
<div class="hnd" style="left:1112px;top:681px"></div>
<div class="rb" style="left:1308px;top:681px"><span>R</span></div>
<div class="t" style="top:706px;line-height:13px;font-size:11px;letter-spacing:0.117px;word-spacing:0.386px;right:304px;">V Offset</div>
<div class="fld" style="left:1033px;top:702px;width:65px;height:18px"></div>
<div class="t" style="top:707px;line-height:13px;font-size:11px;letter-spacing:0.100px;left:1037px;">0.000</div>
<div class="grv" style="left:1103px;top:711px"></div>
<div class="hnd" style="left:1112px;top:704px"></div>
<div class="rb" style="left:1308px;top:704px"><span>R</span></div>
<div class="t" style="top:727px;line-height:13px;font-size:11px;letter-spacing:0.281px;word-spacing:0.222px;right:304px;">Per UDIM Pivot</div>
<div class="cb" style="left:1033px;top:726px"><svg width="9" height="9" viewBox="0 0 9 9"><path d="M1.2 4.6L3.4 7.3L7.8 1.5" fill="none" stroke="#e8e8e8" stroke-width="1.7"/></svg></div>
<div class="rb" style="left:1308px;top:725px"><span>R</span></div>
<svg style="position:absolute;left:60px;top:88px" width="240" height="40" viewBox="60 88 240 40"><path d="M69.5 106.5L77.5 95H256.5V118.5H77.5Z" fill="#982433" stroke="#000" stroke-width="1"/><path d="M256.5 95H271.5L279.5 106.5L271.5 118.5H256.5Z" fill="#ba4858" stroke="#000" stroke-width="1"/><path d="M261 106.7H273M267 100.7V112.7" stroke="#1e1e1e" stroke-width="2" fill="none"/></svg>
<div style="left:69px;top:119px;width:211px;height:235px;background:#404040;border-radius:5px"></div>
<div class="t" style="top:100px;line-height:15px;font-size:13px;color:#0a0a14;letter-spacing:0.261px;font-kerning:auto;left:84px;">Texture Scatter (X4) 2D</div>
<div style="left:266px;top:118px;width:14px;height:21px;background:#b26400"></div>
<div class="t" style="top:122px;line-height:15px;font-size:13px;color:#dcdcdc;letter-spacing:-0.029px;font-kerning:auto;right:1070px;">Output</div>
<div style="left:69px;top:139px;width:14px;height:21px;background:#b26400"></div>
<div class="t" style="top:143px;line-height:15px;font-size:13px;color:#dcdcdc;letter-spacing:0.144px;font-kerning:auto;left:85px;">Manifold (UV)</div>
<div style="left:69px;top:166px;width:14px;height:21px;background:#b26400"></div>
<div class="t" style="top:170px;line-height:15px;font-size:13px;color:#dcdcdc;letter-spacing:0.404px;font-kerning:auto;left:85px;">Bake Point Image A</div>
<div style="left:69px;top:193px;width:14px;height:21px;background:#b26400"></div>
<div class="t" style="top:197px;line-height:15px;font-size:13px;color:#dcdcdc;letter-spacing:0.319px;font-kerning:auto;left:85px;">Bake Point Image B</div>
<div style="left:69px;top:220px;width:14px;height:21px;background:#b26400"></div>
<div class="t" style="top:224px;line-height:15px;font-size:13px;color:#dcdcdc;letter-spacing:0.393px;font-kerning:auto;left:85px;">Bake Point Image C</div>
<div style="left:69px;top:247px;width:14px;height:21px;background:#b26400"></div>
<div class="t" style="top:251px;line-height:15px;font-size:13px;color:#dcdcdc;letter-spacing:0.313px;font-kerning:auto;left:85px;">Bake Point Image D</div>
<div style="left:69px;top:274px;width:14px;height:21px;background:#b26400"></div>
<div class="t" style="top:277px;line-height:15px;font-size:13px;color:#dcdcdc;letter-spacing:0.147px;font-kerning:auto;left:85px;">Edge Falloff</div>
<div style="left:69px;top:301px;width:14px;height:21px;background:#b26400"></div>
<div class="t" style="top:304px;line-height:15px;font-size:13px;color:#dcdcdc;letter-spacing:0.131px;font-kerning:auto;left:85px;">Edge Softness</div>
<div style="left:69px;top:327px;width:14px;height:21px;background:#b26400"></div>
<div class="t" style="top:331px;line-height:15px;font-size:13px;color:#dcdcdc;letter-spacing:0.195px;font-kerning:auto;left:85px;">Edge Roundness</div>
</body></html>
